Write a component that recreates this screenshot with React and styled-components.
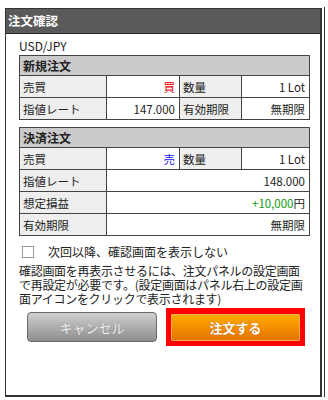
import React, { useState } from "react";
import styled, { createGlobalStyle } from "styled-components";

const GlobalStyle = createGlobalStyle`
  body {
    margin: 0;
    background: #fff;
    font-family: "Noto Sans CJK JP", "Noto Sans", sans-serif;
    color: #222;
  }
`;

const Page = styled.div`
  padding: 8px 0 0 5px;
`;

const Frame = styled.div`
  position: relative;
  box-sizing: border-box;
  width: 317px;
  height: 389px;
  border: 1px solid #333;
  border-right-width: 2px;
  border-bottom-width: 2px;
  background: #fff;

  &::after {
    content: "";
    position: absolute;
    top: -2px;
    bottom: -4px;
    right: -5px;
    width: 1px;
    background: #333;
  }
`;

const TitleBar = styled.div`
  height: 24px;
  background: #5a5a5a;
  border-bottom: 1px solid #2a2a2a;
  color: #fff;
  font-weight: bold;
  font-size: 12.5px;
  line-height: 24px;
  padding-left: 2px;
`;

const Body = styled.div`
  padding: 4px 0 0 13px;
`;

const Pair = styled.div`
  font-size: 12px;
  line-height: 16px;
  height: 16px;
  margin-bottom: 1px;
`;

const Table = styled.table`
  width: 290px;
  border-collapse: collapse;
  table-layout: fixed;
  font-size: 11.5px;
  margin-top: ${(p) => (p.$gap ? "7px" : "0")};
`;

const SectionHead = styled.th`
  background: #cbcbcb;
  border: 1px solid #444;
  text-align: left;
  font-weight: bold;
  height: 19px;
  padding: 0 3px;
  font-size: 12px;
`;

const Label = styled.td`
  background: #eeeeee;
  border: 1px solid #444;
  height: 21px;
  padding: 0 3px;
  white-space: nowrap;
`;

const Value = styled.td`
  border: 1px solid #444;
  height: 21px;
  padding: 0 4px;
  text-align: right;
  white-space: nowrap;
  color: ${(p) => p.$color || "#222"};
`;

const Yen = styled.span`
  color: #222;
`;

const CheckRow = styled.label`
  display: flex;
  align-items: center;
  gap: 14px;
  margin-top: 9px;
  padding-left: 3px;
  font-size: 12px;
  line-height: 14px;
  cursor: pointer;
`;

const Box = styled.span`
  box-sizing: border-box;
  width: 12px;
  height: 12px;
  border: 1px solid #9a9a9a;
  background: #fff;
  display: flex;
  align-items: center;
  justify-content: center;
  font-size: 10px;
  color: #333;
`;

const Note = styled.p`
  margin: 5px 0 0;
  font-size: 12px;
  line-height: 14px;
  width: 292px;
  letter-spacing: -0.3px;
`;

const Buttons = styled.div`
  display: flex;
  align-items: center;
  gap: 9px;
  padding-left: 8px;
  margin-top: 2px;
`;

const CancelButton = styled.button`
  box-sizing: border-box;
  width: 130px;
  height: 30px;
  border: 1px solid #6a6a6a;
  border-radius: 4px;
  background: linear-gradient(#cfcfcf, #8e8e8e);
  color: #f2f2f2;
  font-family: inherit;
  font-size: 13px;
  text-shadow: 0 0 1px #777;
  cursor: pointer;
`;

const Highlight = styled.div`
  box-sizing: border-box;
  width: 139px;
  height: 38px;
  padding: 6px 5px 5px 5px;
  background: #ff0000;
  display: flex;
`;

const OrderButton = styled.button`
  flex: 1;
  border: 1px solid #f2b050;
  border-radius: 1px;
  background: linear-gradient(#ffac00, #e67200);
  color: #fff;
  font-family: inherit;
  font-weight: bold;
  font-size: 13px;
  text-shadow: 0 0 1px #a85000;
  cursor: pointer;
`;

const Cols = () => (
  <colgroup>
    <col style={{ width: 87 }} />
    <col style={{ width: 73 }} />
    <col style={{ width: 62 }} />
    <col style={{ width: 68 }} />
  </colgroup>
);

const App = () => {
  const [hide, setHide] = useState(false);

  return (
    <Page>
      <GlobalStyle />
      <Frame>
        <TitleBar>注文確認</TitleBar>
        <Body>
          <Pair>USD/JPY</Pair>
          <Table>
            <Cols />
            <thead>
              <tr>
                <SectionHead colSpan={4}>新規注文</SectionHead>
              </tr>
            </thead>
            <tbody>
              <tr>
                <Label>売買</Label>
                <Value $color="#e60000">買</Value>
                <Label>数量</Label>
                <Value>1 Lot</Value>
              </tr>
              <tr>
                <Label>指値レート</Label>
                <Value>147.000</Value>
                <Label>有効期限</Label>
                <Value>無期限</Value>
              </tr>
            </tbody>
          </Table>

          <Table $gap>
            <Cols />
            <thead>
              <tr>
                <SectionHead colSpan={4}>決済注文</SectionHead>
              </tr>
            </thead>
            <tbody>
              <tr>
                <Label>売買</Label>
                <Value $color="#1a1aff">売</Value>
                <Label>数量</Label>
                <Value>1 Lot</Value>
              </tr>
              <tr>
                <Label>指値レート</Label>
                <Value colSpan={3}>148.000</Value>
              </tr>
              <tr>
                <Label>想定損益</Label>
                <Value colSpan={3} $color="#119911">
                  +10,000<Yen>円</Yen>
                </Value>
              </tr>
              <tr>
                <Label>有効期限</Label>
                <Value colSpan={3}>無期限</Value>
              </tr>
            </tbody>
          </Table>

          <CheckRow onClick={() => setHide(!hide)}>
            <Box>{hide ? "✓" : ""}</Box>
            次回以降、確認画面を表示しない
          </CheckRow>

          <Note>
            確認画面を再表示させるには、注文パネルの設定画面で再設定が必要です。(設定画面はパネル右上の設定画面アイコンをクリックで表示されます)
          </Note>

          <Buttons>
            <CancelButton>キャンセル</CancelButton>
            <Highlight>
              <OrderButton>注文する</OrderButton>
            </Highlight>
          </Buttons>
        </Body>
      </Frame>
    </Page>
  );
};

export default App;
